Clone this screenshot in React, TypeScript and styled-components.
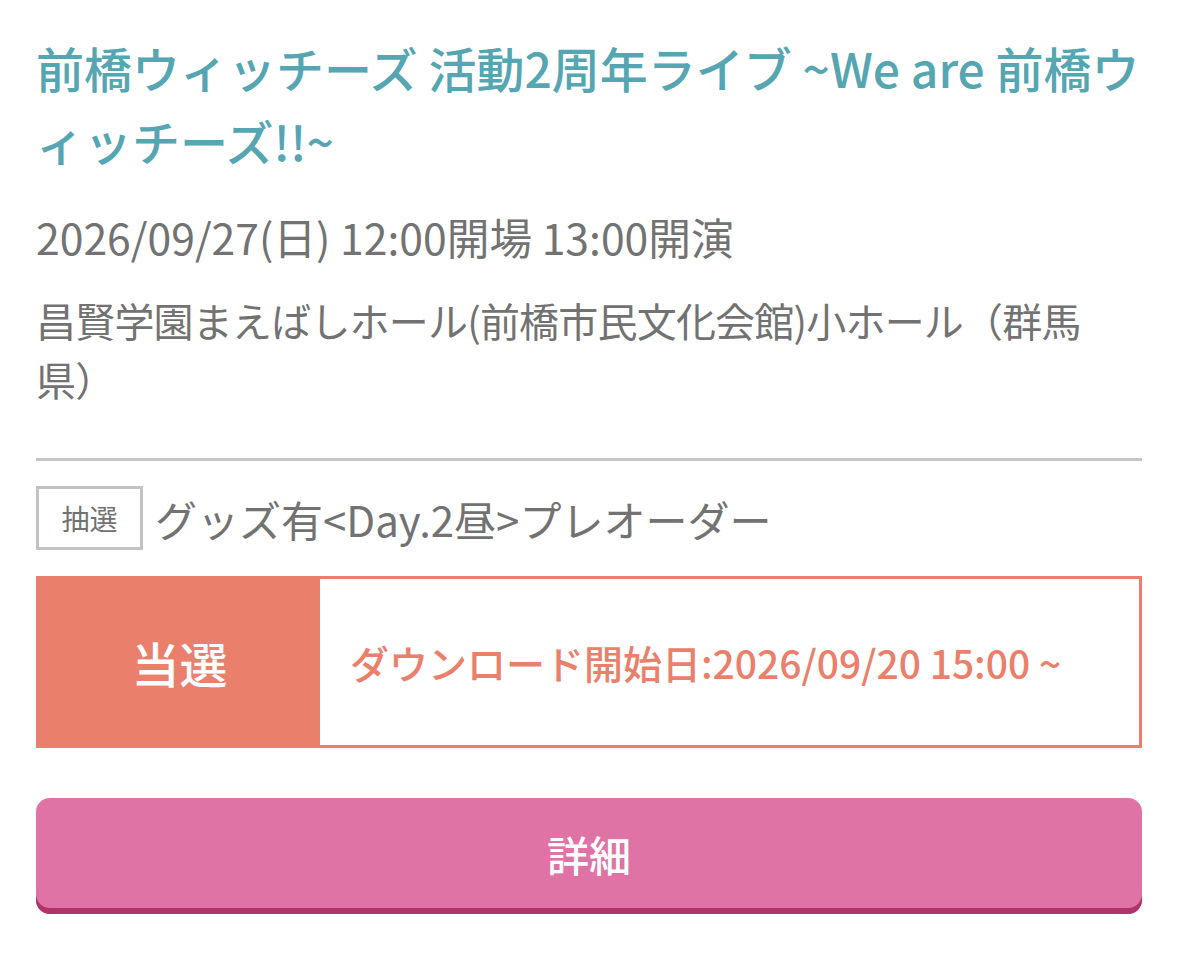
import React from "react";
import styled, { createGlobalStyle } from "styled-components";

const GlobalStyle = createGlobalStyle`
  html, body {
    margin: 0;
    padding: 0;
    background: #fff;
  }
  body {
    font-family: "Noto Sans CJK JP", "Noto Sans", sans-serif;
    color: #727272;
  }
`;

interface Ticket {
  kind: string;
  name: string;
  result: string;
  note: string;
}

const ticket: Ticket = {
  kind: "抽選",
  name: "グッズ有<Day.2昼>プレオーダー",
  result: "当選",
  note: "ダウンロード開始日:2026/09/20 15:00 ~",
};

export default function App() {
  return (
    <>
      <GlobalStyle />
      <Page>
        <EventTitle>
          前橋ウィッチーズ 活動2周年ライブ ~We are 前橋ウィッチーズ!!~
        </EventTitle>
        <DateLine>2026/09/27(日) 12:00開場 13:00開演</DateLine>
        <Venue>昌賢学園まえばしホール(前橋市民文化会館)小ホール（群馬県）</Venue>
        <Divider />
        <TicketRow>
          <KindTag>{ticket.kind}</KindTag>
          <TicketName>{ticket.name}</TicketName>
        </TicketRow>
        <StatusBox>
          <StatusLabel>{ticket.result}</StatusLabel>
          <StatusNote>{ticket.note}</StatusNote>
        </StatusBox>
        <DetailButton>詳細</DetailButton>
      </Page>
    </>
  );
}

const Page = styled.div`
  width: 1106px;
  padding: 31px 36px 40px;
  display: flex;
  flex-direction: column;
`;

const EventTitle = styled.h1`
  margin: 0;
  font-size: 48px;
  font-weight: 500;
  line-height: 73px;
  color: #55a6b2;
`;

const DateLine = styled.p`
  margin: 34px 0 0;
  font-size: 42.7px;
  line-height: 50px;
  color: #727272;
`;

const Venue = styled.p`
  max-width: 1085px;
  margin: 30px 0 0;
  font-size: 40px;
  letter-spacing: -0.8px;
  line-height: 59px;
  color: #727272;
`;

const Divider = styled.hr`
  margin: 49px 0 0;
  border: none;
  height: 3px;
  background: #c4c4c4;
`;

const TicketRow = styled.div`
  display: flex;
  align-items: center;
  gap: 12px;
  height: 64px;
  margin-top: 25px;
`;

const KindTag = styled.span`
  box-sizing: border-box;
  width: 107px;
  height: 64px;
  border: 3px solid #c2c2c2;
  display: flex;
  align-items: center;
  justify-content: center;
  font-size: 28px;
  color: #727272;
`;

const TicketName = styled.span`
  font-size: 42px;
  color: #727272;
`;

const StatusBox = styled.div`
  display: flex;
  height: 172px;
  margin-top: 26px;
  box-sizing: border-box;
  border: 3px solid #ea7f6b;
`;

const StatusLabel = styled.div`
  width: 281px;
  background: #ea7f6b;
  color: #fff;
  display: flex;
  align-items: center;
  justify-content: center;
  font-size: 48px;
  font-weight: 500;
`;

const StatusNote = styled.div`
  flex: 1;
  display: flex;
  align-items: center;
  padding-left: 30px;
  font-size: 39px;
  font-weight: 500;
  color: #ea7f6b;
`;

const DetailButton = styled.button`
  margin-top: 50px;
  height: 116px;
  border: none;
  border-radius: 14px;
  background: #e073a6;
  box-shadow: inset 0 -6px 0 #b0336a;
  color: #fff;
  font-family: inherit;
  font-size: 42px;
  font-weight: 500;
  padding-bottom: 6px;
  cursor: pointer;
`;
